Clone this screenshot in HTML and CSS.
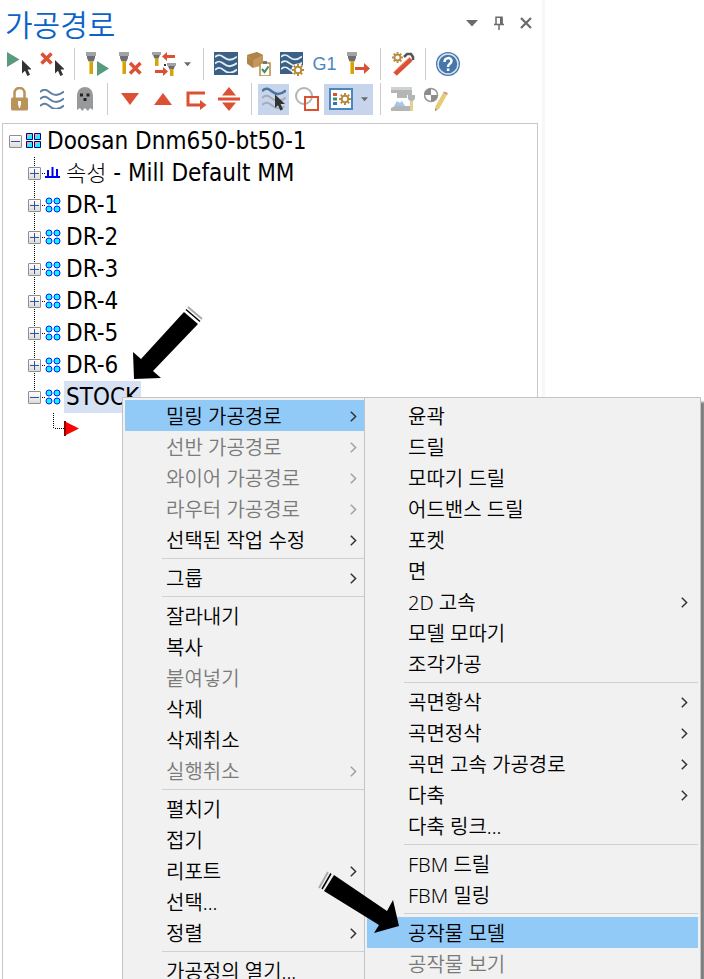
FILE: index.html
```html
<!DOCTYPE html>
<html lang="ko">
<head>
<meta charset="utf-8">
<title>가공경로</title>
<link rel="stylesheet" href="styles.css">
</head>
<body>
<svg class="defs" aria-hidden="true">
  <symbol id="cursor" viewBox="0 0 10 16"><path fill="#333" d="M0 0v13.5l3-2.8 2.4 5.3 2.6-1.2-2.4-5.2H10z"/></symbol>
  <symbol id="tool" viewBox="0 0 10 23"><path fill="#a2a3a5" d="M0 0h10v4H0z"/><path fill="#6d6e71" d="M1 4h8v2L7.500 9.500h-5L1 6z"/><path fill="#d4a30d" d="M3 9.500h4V22H3z"/><path fill="#f0cf52" d="M3 9.500h1V22H3z"/></symbol>
  <symbol id="gear" viewBox="0 0 12 12"><g fill="none" stroke="#b98a3c"><circle cx="6" cy="6" r="3.300" stroke-width="2"/><path stroke-width="2" d="M6 0v2M6 10v2M0 6h2M10 6h2M1.800 1.800l1.400 1.400M8.800 8.800l1.400 1.400M1.800 10.200l1.400-1.400M8.800 3.200l1.400-1.400"/></g></symbol>
  <symbol id="waves" viewBox="0 0 24 20"><path fill="none" stroke="currentColor" stroke-width="2" d="M0 3C4-1 7 1 10 3.500s8 4 14-1M0 10c4-4 7-2 10 .5s8 4 14-1M0 17c4-4 7-2 10 .5s8 4 14-1"/></symbol>
  <symbol id="group" viewBox="0 0 16 16"><g fill="#0ff" stroke="#11f"><circle cx="4" cy="4" r="3"/><circle cx="12" cy="4" r="3"/><circle cx="4" cy="12" r="3"/><circle cx="12" cy="12" r="3"/></g></symbol>
  <symbol id="chevron" viewBox="0 0 7 11"><path fill="none" stroke="currentColor" stroke-width="1.500" d="M.8.800 5.600 5.500.8 10.200"/></symbol>
</svg>

<div class="app">
  <section class="panel" aria-label="가공경로">
    <header class="titlebar">
      <h1>가공경로</h1>
      <div class="window-buttons">
        <button aria-label="옵션"><svg width="12" height="8" viewBox="0 0 12 8"><path fill="#6b6b6b" d="M0 1h12L6 7.500z"/></svg></button>
        <button aria-label="고정"><svg width="12" height="14" viewBox="0 0 12 14"><path fill="none" stroke="#6b6b6b" stroke-width="1.500" d="M3 8V1.200h6V8M1 8.500h10M6 9v5"/><path fill="#6b6b6b" d="M7 1h2.500v7H7z"/></svg></button>
        <button aria-label="닫기"><svg width="12" height="12" viewBox="0 0 12 12"><path stroke="#6b6b6b" stroke-width="2.200" d="M1 1l10 10M11 1 1 11"/></svg></button>
      </div>
    </header>

    <div class="toolbar" role="toolbar" aria-label="작업">
      <button aria-label="전체 선택"><svg class="icon" viewBox="0 0 24 24"><path fill="#579a7d" d="M0 0l12.500 7.500L0 15z"/><use href="#cursor" x="15" y="8" width="10" height="16"/></svg></button>
      <button aria-label="선택 해제"><svg class="icon" viewBox="0 0 24 24"><path stroke="#dc5033" stroke-width="3.500" d="M1.500 1.500l10 10M11.500 1.500l-10 10"/><use href="#cursor" x="15" y="8" width="10" height="16"/></svg></button>
      <span class="divider"></span>
      <button aria-label="재생성"><svg class="icon" viewBox="0 0 24 24"><use href="#tool" x="1" y="0" width="10" height="23"/><path fill="#579a7d" d="M12 9l12 7.500L12 24z"/></svg></button>
      <button aria-label="오류 작업 재생성"><svg class="icon" viewBox="0 0 24 24"><use href="#tool" x="1" y="0" width="10" height="23"/><path stroke="#dc5033" stroke-width="3.500" d="M12 11l10.500 10.500M22.500 11 12 21.500"/></svg></button>
      <button class="split" aria-label="작업 변환"><svg class="icon" viewBox="0 0 24 24"><path fill="#a2a3a5" d="M0 0h9v3H0zM15 11h9v3h-9z"/><path fill="#6d6e71" d="M1 3h7l-1.500 3.500h-4zM16 14h7l-1.500 3.500h-4z"/><path fill="#d4a30d" d="M3 6h3.500v8H3zM18 17h3.500v7H18z"/><path fill="#dc5033" d="M10 4.500 15 0v3h8v3h-8v3zM16 19.500l-5-4.500v3H3v3h8v3z"/><path fill="#333" d="M12 12h2v2h-2z"/></svg><svg class="caret" viewBox="0 0 8 5"><path d="M0 0h8L4 4.500z"/></svg></button>
      <span class="divider"></span>
      <button aria-label="백플롯"><svg class="icon" viewBox="0 0 24 24"><path fill="#3a6185" d="M0 0h24v23H0z"/><use href="#waves" x="1" y="2" width="22" height="19" color="#e5edf5"/></svg></button>
      <button aria-label="모의가공"><svg class="icon" viewBox="0 0 24 24"><path fill="#c3985a" d="M0 3 10 0l6 3v10L6 16l-6-5z"/><path fill="#9c7337" d="M0 5l6 3v8l-6-4zM10 0l6 3-10 5-6-5z" opacity=".55"/><path fill="#fff" stroke="#b98a3c" stroke-width="1.500" d="M13 11h10v13H13z"/><path fill="#777" d="M16 9h4v3h-4z"/><path fill="none" stroke="#3f8a68" stroke-width="2" d="M15 17l2.500 3 4-5.500"/></svg></button>
      <button aria-label="모의가공 옵션"><svg class="icon" viewBox="0 0 24 24"><path fill="#3a6185" d="M0 0h23v22H0z"/><use href="#waves" x="1" y="2" width="21" height="18" color="#e5edf5"/><circle cx="18" cy="18" r="6.500" fill="#fff"/><use href="#gear" x="12" y="12" width="12" height="12"/></svg></button>
      <button class="g1" aria-label="포스트">G1</button>
      <button aria-label="고속이송"><svg class="icon" viewBox="0 0 24 24"><use href="#tool" x="1" y="0" width="10" height="23"/><path fill="#dc5033" d="M9 15h9v-4l6 5.500-6 5.500v-4H9z"/></svg></button>
      <span class="divider"></span>
      <button aria-label="공구 마법사"><svg class="icon" viewBox="0 0 24 24"><use href="#gear" x="1" y="0" width="11" height="11"/><path stroke="#dc5033" stroke-width="5" d="M4 22 20 7"/><path stroke="#f39a7c" d="M3 20 18 6"/><path fill="none" stroke="#555" stroke-width="2.500" d="M13 5l3-3h4l2 3v3"/></svg></button>
      <span class="divider"></span>
      <button aria-label="도움말"><svg class="icon" viewBox="0 0 24 24"><circle cx="12" cy="12" r="12" fill="#4676aa"/><circle cx="12" cy="12" r="10" fill="none" stroke="#d9e5f2" stroke-width="1.500"/><path fill="none" stroke="#fff" stroke-width="2.500" d="M8.500 10c0-5 7-5 7-1 0 3-3.500 2.500-3.500 6"/><path fill="#fff" d="M10.800 16.500h2.600V19h-2.600z"/></svg></button>
    </div>

    <div class="toolbar" role="toolbar" aria-label="표시">
      <button aria-label="잠금"><svg class="icon" viewBox="0 0 24 24"><path fill="none" stroke="#b9935a" stroke-width="2.500" d="M7.500 11V6a5 5 0 0 1 10 0v5"/><rect x="4" y="10.500" width="17" height="13" rx="1.500" fill="#b9935a"/><path fill="#fff" d="M11 14h3v3l-1 4h-1l-1-4z"/></svg></button>
      <button aria-label="경로 표시"><svg class="icon" viewBox="0 0 24 24"><use href="#waves" x="0" y="2" width="24" height="20" color="#5d80a2"/></svg></button>
      <button aria-label="고스트"><svg class="icon" viewBox="0 0 24 24"><path fill="#98999b" d="M4 23V9c0-12 16-12 16 0v14l-3-2-2 3-3-3-3 3-2-3z"/><path fill="#222" d="M7 6.500h3v3H7zM13.500 6.500h3v3h-3zM10.500 11h3v3h-3z"/></svg></button>
      <span class="divider"></span>
      <button aria-label="아래로 이동"><svg class="icon" viewBox="0 0 24 24"><path fill="#dc5033" d="M3 6h18l-9 12z"/></svg></button>
      <button aria-label="위로 이동"><svg class="icon" viewBox="0 0 24 24"><path fill="#dc5033" d="M3 18h18L12 6z"/></svg></button>
      <button aria-label="삽입 위치"><svg class="icon" viewBox="0 0 24 24"><path fill="none" stroke="#dc5033" stroke-width="3" d="M21 6H4v12h13"/><path fill="#dc5033" d="M16 13l6.500 5-6.500 5z"/></svg></button>
      <button aria-label="스크롤"><svg class="icon" viewBox="0 0 24 24"><path fill="#dc5033" d="M5 8.500 12 0l7 8.500zM5 15.500h14L12 24zM1 10.500h22v3H1z"/></svg></button>
      <span class="divider"></span>
      <button class="active" aria-label="선택 경로 표시" aria-pressed="true"><svg class="icon" viewBox="0 0 24 24"><path fill="none" stroke="#a6acb5" stroke-width="2" d="M0 11c4-4 7-2 10 .5s8 4 14-1M0 18c4-4 7-2 10 .5s8 4 12 1"/><path fill="none" stroke="#4c75a0" stroke-width="2.500" d="M0 4C4 0 7 2 10 4.500s8 4 14-1"/><use href="#cursor" x="13" y="7" width="10" height="17"/></svg></button>
      <button aria-label="도형 표시"><svg class="icon" viewBox="0 0 24 24"><circle cx="9" cy="9" r="8" fill="none" stroke="#b4b4b6" stroke-width="2"/><path fill="none" stroke="#dc5033" stroke-width="2" d="M10 10h13v13H10z"/></svg></button>
      <button class="split active" aria-label="표시 옵션"><svg class="icon" viewBox="0 0 24 24"><path fill="#fff" stroke="#4a86c0" stroke-width="2" d="M1 2h22v20H1z"/><path fill="#dc5033" d="M4 6h4v3H4z"/><path fill="#3f8a68" d="M4 10.500h4v3H4z"/><path fill="#3a6fb0" d="M4 15h4v3H4z"/><use href="#gear" x="10" y="6" width="12" height="12"/></svg><svg class="caret" viewBox="0 0 8 5"><path d="M0 0h8L4 4.500z"/></svg></button>
      <span class="divider"></span>
      <button aria-label="기계 시뮬레이션"><svg class="icon" viewBox="0 0 24 24"><path fill="#b4b5b7" d="M0 0h21v8h-5v3H6V6H0zM4 19h16v5H0v-3z"/><path fill="#d0d1d2" d="M0 0h21v3H0z"/><path fill="#a3c8e8" d="M3 19l3-5 3 2 2-2 3 5z"/><path fill="#b4b5b7" d="M17 8h7v4l-2 2h-3l-2-2z"/><path fill="#e6cf8c" d="M19 14h3v10h-3z"/></svg></button>
      <button aria-label="좌표 편집"><svg class="icon" viewBox="0 0 24 24"><circle cx="7" cy="8" r="6.500" fill="#fff" stroke="#999" stroke-width="1.500"/><path fill="#8b8c8e" d="M7 8V1.500A6.500 6.500 0 0 0 .5 8zM7 8v6.500A6.500 6.500 0 0 0 13.500 8z"/><path fill="#e8cb78" d="M19 6l4 2-8 14-4 2 .5-5z"/><path fill="#d69387" d="M20 4.500 24 6l-1 2-4-2z"/><path fill="#777" d="M11 24l.3-2.500 1.700 1z"/></svg></button>
    </div>

    <div class="tree-box">
      <ul class="tree" role="tree">
        <li role="treeitem" aria-expanded="true">
          <div class="node"><button class="expander" aria-label="접기"></button><svg class="node-icon" viewBox="0 0 16 16"><path fill="#0ff" stroke="#00008b" d="M.5.500h6v6h-6zM8.500.500h6v6h-6zM.5 8.500h6v6h-6zM8.500 8.500h6v6h-6z"/><path fill="#e5a9a4" d="M1 1h5L1 5zM9 1h5L9 5zM1 9h5l-5 4zM9 9h5l-5 4z"/></svg><span class="label">Doosan Dnm650-bt50-1</span></div>
          <ul role="group">
            <li role="treeitem" class="child"><div class="node"><button class="expander closed" aria-label="펼치기"></button><svg class="node-icon" viewBox="0 0 16 16"><path fill="#0000f0" d="M0 11h15v2H0zM2 5h2v6H2zM6.500 2h2v9h-2zM11 4h2v7h-2z"/></svg><span class="label"><span class="hangul">속성</span> - Mill Default MM</span></div></li>
            <li role="treeitem" class="child"><div class="node"><button class="expander closed" aria-label="펼치기"></button><svg class="node-icon"><use href="#group"/></svg><span class="label">DR-1</span></div></li>
            <li role="treeitem" class="child"><div class="node"><button class="expander closed" aria-label="펼치기"></button><svg class="node-icon"><use href="#group"/></svg><span class="label">DR-2</span></div></li>
            <li role="treeitem" class="child"><div class="node"><button class="expander closed" aria-label="펼치기"></button><svg class="node-icon"><use href="#group"/></svg><span class="label">DR-3</span></div></li>
            <li role="treeitem" class="child"><div class="node"><button class="expander closed" aria-label="펼치기"></button><svg class="node-icon"><use href="#group"/></svg><span class="label">DR-4</span></div></li>
            <li role="treeitem" class="child"><div class="node"><button class="expander closed" aria-label="펼치기"></button><svg class="node-icon"><use href="#group"/></svg><span class="label">DR-5</span></div></li>
            <li role="treeitem" class="child"><div class="node"><button class="expander closed" aria-label="펼치기"></button><svg class="node-icon"><use href="#group"/></svg><span class="label">DR-6</span></div></li>
            <li role="treeitem" class="child" aria-expanded="true" aria-selected="true">
              <div class="node"><button class="expander" aria-label="접기"></button><svg class="node-icon"><use href="#group"/></svg><span class="label selected">STOCK</span></div>
              <div class="insert"><span class="elbow"></span><svg width="16" height="16" viewBox="0 0 16 16"><path fill="red" d="M0 0l15 7.500L0 15z"/><path fill="#8b0000" d="M0 0h2v15H0z"/></svg></div>
            </li>
          </ul>
        </li>
      </ul>
    </div>
  </section>
  <main class="workspace"></main>

  <div class="menu context" role="menu">
    <button role="menuitem" class="current">밀링 가공경로<svg class="chevron"><use href="#chevron"/></svg></button>
    <button role="menuitem" disabled>선반 가공경로<svg class="chevron"><use href="#chevron"/></svg></button>
    <button role="menuitem" disabled>와이어 가공경로<svg class="chevron"><use href="#chevron"/></svg></button>
    <button role="menuitem" disabled>라우터 가공경로<svg class="chevron"><use href="#chevron"/></svg></button>
    <button role="menuitem">선택된 작업 수정<svg class="chevron"><use href="#chevron"/></svg></button>
    <hr>
    <button role="menuitem">그룹<svg class="chevron"><use href="#chevron"/></svg></button>
    <hr>
    <button role="menuitem">잘라내기</button>
    <button role="menuitem">복사</button>
    <button role="menuitem" disabled>붙여넣기</button>
    <button role="menuitem">삭제</button>
    <button role="menuitem">삭제취소</button>
    <button role="menuitem" disabled>실행취소<svg class="chevron"><use href="#chevron"/></svg></button>
    <hr>
    <button role="menuitem">펼치기</button>
    <button role="menuitem">접기</button>
    <button role="menuitem">리포트<svg class="chevron"><use href="#chevron"/></svg></button>
    <button role="menuitem">선택...</button>
    <button role="menuitem">정렬<svg class="chevron"><use href="#chevron"/></svg></button>
    <hr>
    <button role="menuitem">가공정의 열기...</button>
  </div>

  <div class="menu submenu" role="menu">
    <button role="menuitem">윤곽</button>
    <button role="menuitem">드릴</button>
    <button role="menuitem">모따기 드릴</button>
    <button role="menuitem">어드밴스 드릴</button>
    <button role="menuitem">포켓</button>
    <button role="menuitem">면</button>
    <button role="menuitem">2D 고속<svg class="chevron"><use href="#chevron"/></svg></button>
    <button role="menuitem">모델 모따기</button>
    <button role="menuitem">조각가공</button>
    <hr>
    <button role="menuitem">곡면황삭<svg class="chevron"><use href="#chevron"/></svg></button>
    <button role="menuitem">곡면정삭<svg class="chevron"><use href="#chevron"/></svg></button>
    <button role="menuitem">곡면 고속 가공경로<svg class="chevron"><use href="#chevron"/></svg></button>
    <button role="menuitem">다축<svg class="chevron"><use href="#chevron"/></svg></button>
    <button role="menuitem">다축 링크...</button>
    <hr>
    <button role="menuitem">FBM 드릴</button>
    <button role="menuitem">FBM 밀링</button>
    <hr>
    <button role="menuitem" class="current">공작물 모델</button>
    <button role="menuitem" disabled>공작물 보기</button>
  </div>

  <svg class="pointer pointer-stock" width="72" height="78" viewBox="0 0 72 78" aria-hidden="true"><path d="M4 75 3 48l8 7L54 8l14 12-45 47 8 7z"/><path fill="none" stroke="#000" stroke-width="1.500" d="M56 5.500l14 12"/><path fill="none" stroke="#aaa" stroke-width="2" d="M58 3l14 12"/></svg>
  <svg class="pointer pointer-model" width="84" height="66" viewBox="0 0 84 66" aria-hidden="true"><path d="M83 58 77 32l-6 11L18 7 8 23l55 34-5 8z"/><path fill="none" stroke="#000" stroke-width="1.500" d="M15 5.500 6 21"/><path fill="none" stroke="#aaa" stroke-width="2" d="M12 4 3 20"/></svg>
</div>
</body>
</html>
```
FILE: styles.css
```css
* { box-sizing: border-box; }

body {
  margin: 0;
  background: #fff;
  color: #000;
  font-family: "Noto Sans", "Noto Sans CJK KR", sans-serif;
}

button {
  margin: 0;
  padding: 0;
  border: 0;
  background: none;
  color: inherit;
  font: inherit;
}

.defs { position: absolute; width: 0; height: 0; }

.app {
  position: relative;
  display: grid;
  grid-template-columns: minmax(0, 545fr) minmax(0, 159fr);
  height: 100vh;
  overflow: hidden;
}

.panel {
  display: flex;
  flex-direction: column;
  border-right: 3px solid #f7f7f7;
}

/* Title bar */
.titlebar {
  display: flex;
  justify-content: space-between;
  align-items: center;
  height: 48px;
  padding: 0 3px 3px 5px;
}

.titlebar h1 {
  margin: 0;
  color: #0a64c8;
  font-family: "Noto Sans CJK KR", sans-serif;
  font-size: 30px;
  font-weight: 350;
  line-height: 40px;
}

.window-buttons { display: flex; }

.window-buttons button {
  display: grid;
  place-items: center;
  width: 27px;
  height: 28px;
}

/* Toolbars */
.toolbar {
  display: flex;
  align-items: center;
  gap: 2px;
  height: 32px;
  margin-bottom: 3px;
  padding-left: 3px;
}

.toolbar button {
  display: flex;
  align-items: center;
  justify-content: center;
  width: 31px;
  height: 31px;
}

.toolbar .split {
  justify-content: flex-start;
  gap: 8px;
  width: 49px;
  padding-left: 5px;
}

.toolbar .active { background: #c6d4ec; }

.toolbar .g1 {
  color: #4a86c0;
  font-family: "Liberation Sans", sans-serif;
  font-size: 18px;
}

.icon { width: 24px; height: 24px; }

.caret { width: 7px; height: 5px; fill: #6b6b6b; }

.divider {
  width: 1px;
  height: 32px;
  margin: 0 4px 0 5px;
  background: #ccc;
}

/* Operations tree */
.tree-box {
  flex: 1;
  margin: 5px 4px 0 2px;
  padding: 1px 0 0 6px;
  border: 1px solid #c8c8c8;
  border-bottom: 0;
}

.tree, .tree ul { margin: 0; padding: 0; list-style: none; }

.node { display: flex; align-items: center; height: 32px; }

.expander {
  width: 13px;
  height: 13px;
  border: 1px solid #8f8f8f;
  border-radius: 1px;
  background:
    linear-gradient(#3450a0, #3450a0) center / 9px 1px no-repeat,
    linear-gradient(#fff, #dcdcdc);
}

.expander.closed {
  background:
    linear-gradient(#3450a0, #3450a0) center / 9px 1px no-repeat,
    linear-gradient(#3450a0, #3450a0) center / 1px 9px no-repeat,
    linear-gradient(#fff, #dcdcdc);
}

.node-icon { width: 16px; height: 16px; margin-left: 4px; }

.label {
  margin-left: 3px;
  padding: 0 2px;
  font-family: "DejaVu Sans Condensed", "Noto Sans", "Noto Sans CJK KR", sans-serif;
  font-size: 24px;
  line-height: 32px;
  white-space: nowrap;
}

.hangul {
  font-family: "Noto Sans CJK KR", sans-serif;
  font-size: 22px;
  font-weight: 300;
  line-height: 24px;
}

.selected { background: #d6e2f3; }

.child { padding-left: 19px; }

.child > .node {
  background:
    repeating-linear-gradient(#000 0 1px, #fff 1px 2px) 6px 0 / 1px 100% no-repeat,
    repeating-linear-gradient(90deg, #000 0 1px, #fff 1px 2px) 14px 16px / 4px 1px no-repeat;
}

.child:last-child > .node {
  background-size: 1px 16px, 4px 1px;
}

.insert { display: flex; align-items: center; height: 32px; padding-left: 25px; }

.elbow {
  align-self: flex-start;
  width: 11px;
  height: 16px;
  background:
    repeating-linear-gradient(#000 0 1px, #fff 1px 2px) 0 0 / 1px 100% no-repeat,
    repeating-linear-gradient(90deg, #000 0 1px, #fff 1px 2px) 0 100% / 100% 1px no-repeat;
}

/* Menus float over the panel and workspace */
.menu {
  position: absolute;
  top: 397px;
  padding: 2px;
  border: 1px solid #c4c4c4;
  background: #f1f1f1;
  font-size: 20px;
  font-weight: 350;
}

.context { left: 122px; width: 248px; }

.submenu {
  left: 364px;
  width: 337px;
  box-shadow: 4px 5px 2px rgba(0, 0, 0, .5);
}

.menu button {
  display: flex;
  align-items: center;
  justify-content: space-between;
  width: 100%;
  height: 31px;
  padding: 2px 10px 0 41px;
  line-height: 29px;
  white-space: nowrap;
}

.menu button:disabled { color: #7a7a7a; }

.menu .current { background: #91c9f7; }

.menu hr {
  height: 1px;
  margin: 3px 0 3px 37px;
  border: 0;
  background: #d0d0d0;
}

.chevron { width: 7px; height: 11px; color: #333; }

.menu button:disabled .chevron { color: #a0a0a0; }

/* Arrows drawn over the menus */
.pointer { position: absolute; overflow: visible; }

.pointer-stock { left: 130px; top: 304px; }

.pointer-model { left: 316px; top: 868px; }
```
